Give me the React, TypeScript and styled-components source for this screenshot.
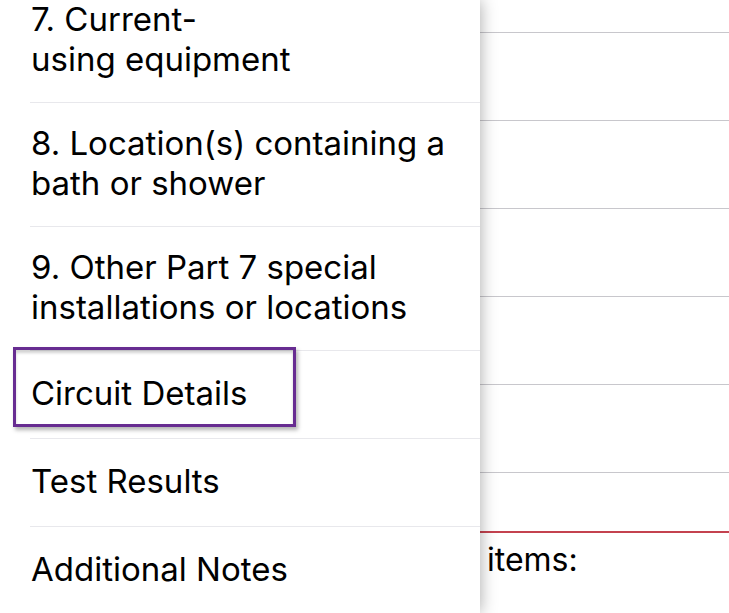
import React from 'react';
import styled, { createGlobalStyle } from 'styled-components';

const GlobalStyle = createGlobalStyle`
  html, body {
    margin: 0;
    padding: 0;
    background: #ffffff;
    overflow: hidden;
  }
  body {
    font-family: Inter, "Noto Sans", "Liberation Sans", sans-serif;
    color: #000000;
  }
`;

const StyledScreen = styled.div`
  display: flex;
  width: 729px;
  height: 613px;
  overflow: hidden;
  background: #ffffff;
`;

const StyledDrawer = styled.nav`
  position: relative;
  z-index: 2;
  flex: 0 0 480px;
  background: #ffffff;
  box-shadow: 0 0 16px rgba(0, 0, 0, 0.35);
`;

const StyledMenuList = styled.ul`
  list-style: none;
  margin: -21px 0 0 0;
  padding: 0;
`;

const StyledMenuItem = styled.li<{ $tall?: boolean }>`
  position: relative;
  box-sizing: border-box;
  display: flex;
  align-items: center;
  min-height: 88px;
  margin-left: 30px;
  padding: ${(p) => (p.$tall ? '20px 20px 23px 1px' : '0 20px 3px 1px')};
  border-bottom: 1px solid #e8e8ec;
  font-size: 33px;
  line-height: 40px;
  white-space: nowrap;
`;

const StyledHighlight = styled.span`
  position: absolute;
  left: -17px;
  top: -4px;
  width: 283px;
  height: 80px;
  box-sizing: border-box;
  border: 3px solid #672c91;
  box-shadow: 2px 3px 4px rgba(0, 0, 0, 0.3), inset 0 3px 3px rgba(0, 0, 0, 0.18);
  pointer-events: none;
`;

const StyledMain = styled.main`
  flex: 1;
  min-width: 0;
  display: flex;
  flex-direction: column;
  margin-top: -55px;
`;

const StyledMainRow = styled.div`
  box-sizing: border-box;
  height: 88px;
  flex-shrink: 0;
  border-bottom: 1px solid #c8c7cc;
`;

const StyledSection = styled.div`
  box-sizing: border-box;
  height: 60px;
  flex-shrink: 0;
  border-bottom: 2px solid #c4424f;
`;

const StyledLabel = styled.div`
  padding: 7px 0 0 7px;
  font-size: 32px;
  line-height: 40px;
  white-space: nowrap;
`;

const menu = [
  { id: 7, lines: ['7. Current-', 'using equipment'] },
  { id: 8, lines: ['8. Location(s) containing a', 'bath or shower'] },
  { id: 9, lines: ['9. Other Part 7 special', 'installations or locations'] },
  { id: 10, lines: ['Circuit Details'], selected: true },
  { id: 11, lines: ['Test Results'] },
  { id: 12, lines: ['Additional Notes'] },
];

const App = () => {
  return (
    <>
      <GlobalStyle />
      <StyledScreen>
        <StyledDrawer>
          <StyledMenuList>
            {menu.map((item) => (
              <StyledMenuItem key={item.id} $tall={item.lines.length > 1}>
                <span>
                  {item.lines.map((line, i) => (
                    <React.Fragment key={i}>
                      {i > 0 && <br />}
                      {line}
                    </React.Fragment>
                  ))}
                </span>
                {item.selected && <StyledHighlight />}
              </StyledMenuItem>
            ))}
          </StyledMenuList>
        </StyledDrawer>

        <StyledMain>
          {[0, 1, 2, 3, 4, 5].map((n) => (
            <StyledMainRow key={n} />
          ))}
          <StyledSection />
          <StyledLabel>items:</StyledLabel>
        </StyledMain>
      </StyledScreen>
    </>
  );
};

export default App;
